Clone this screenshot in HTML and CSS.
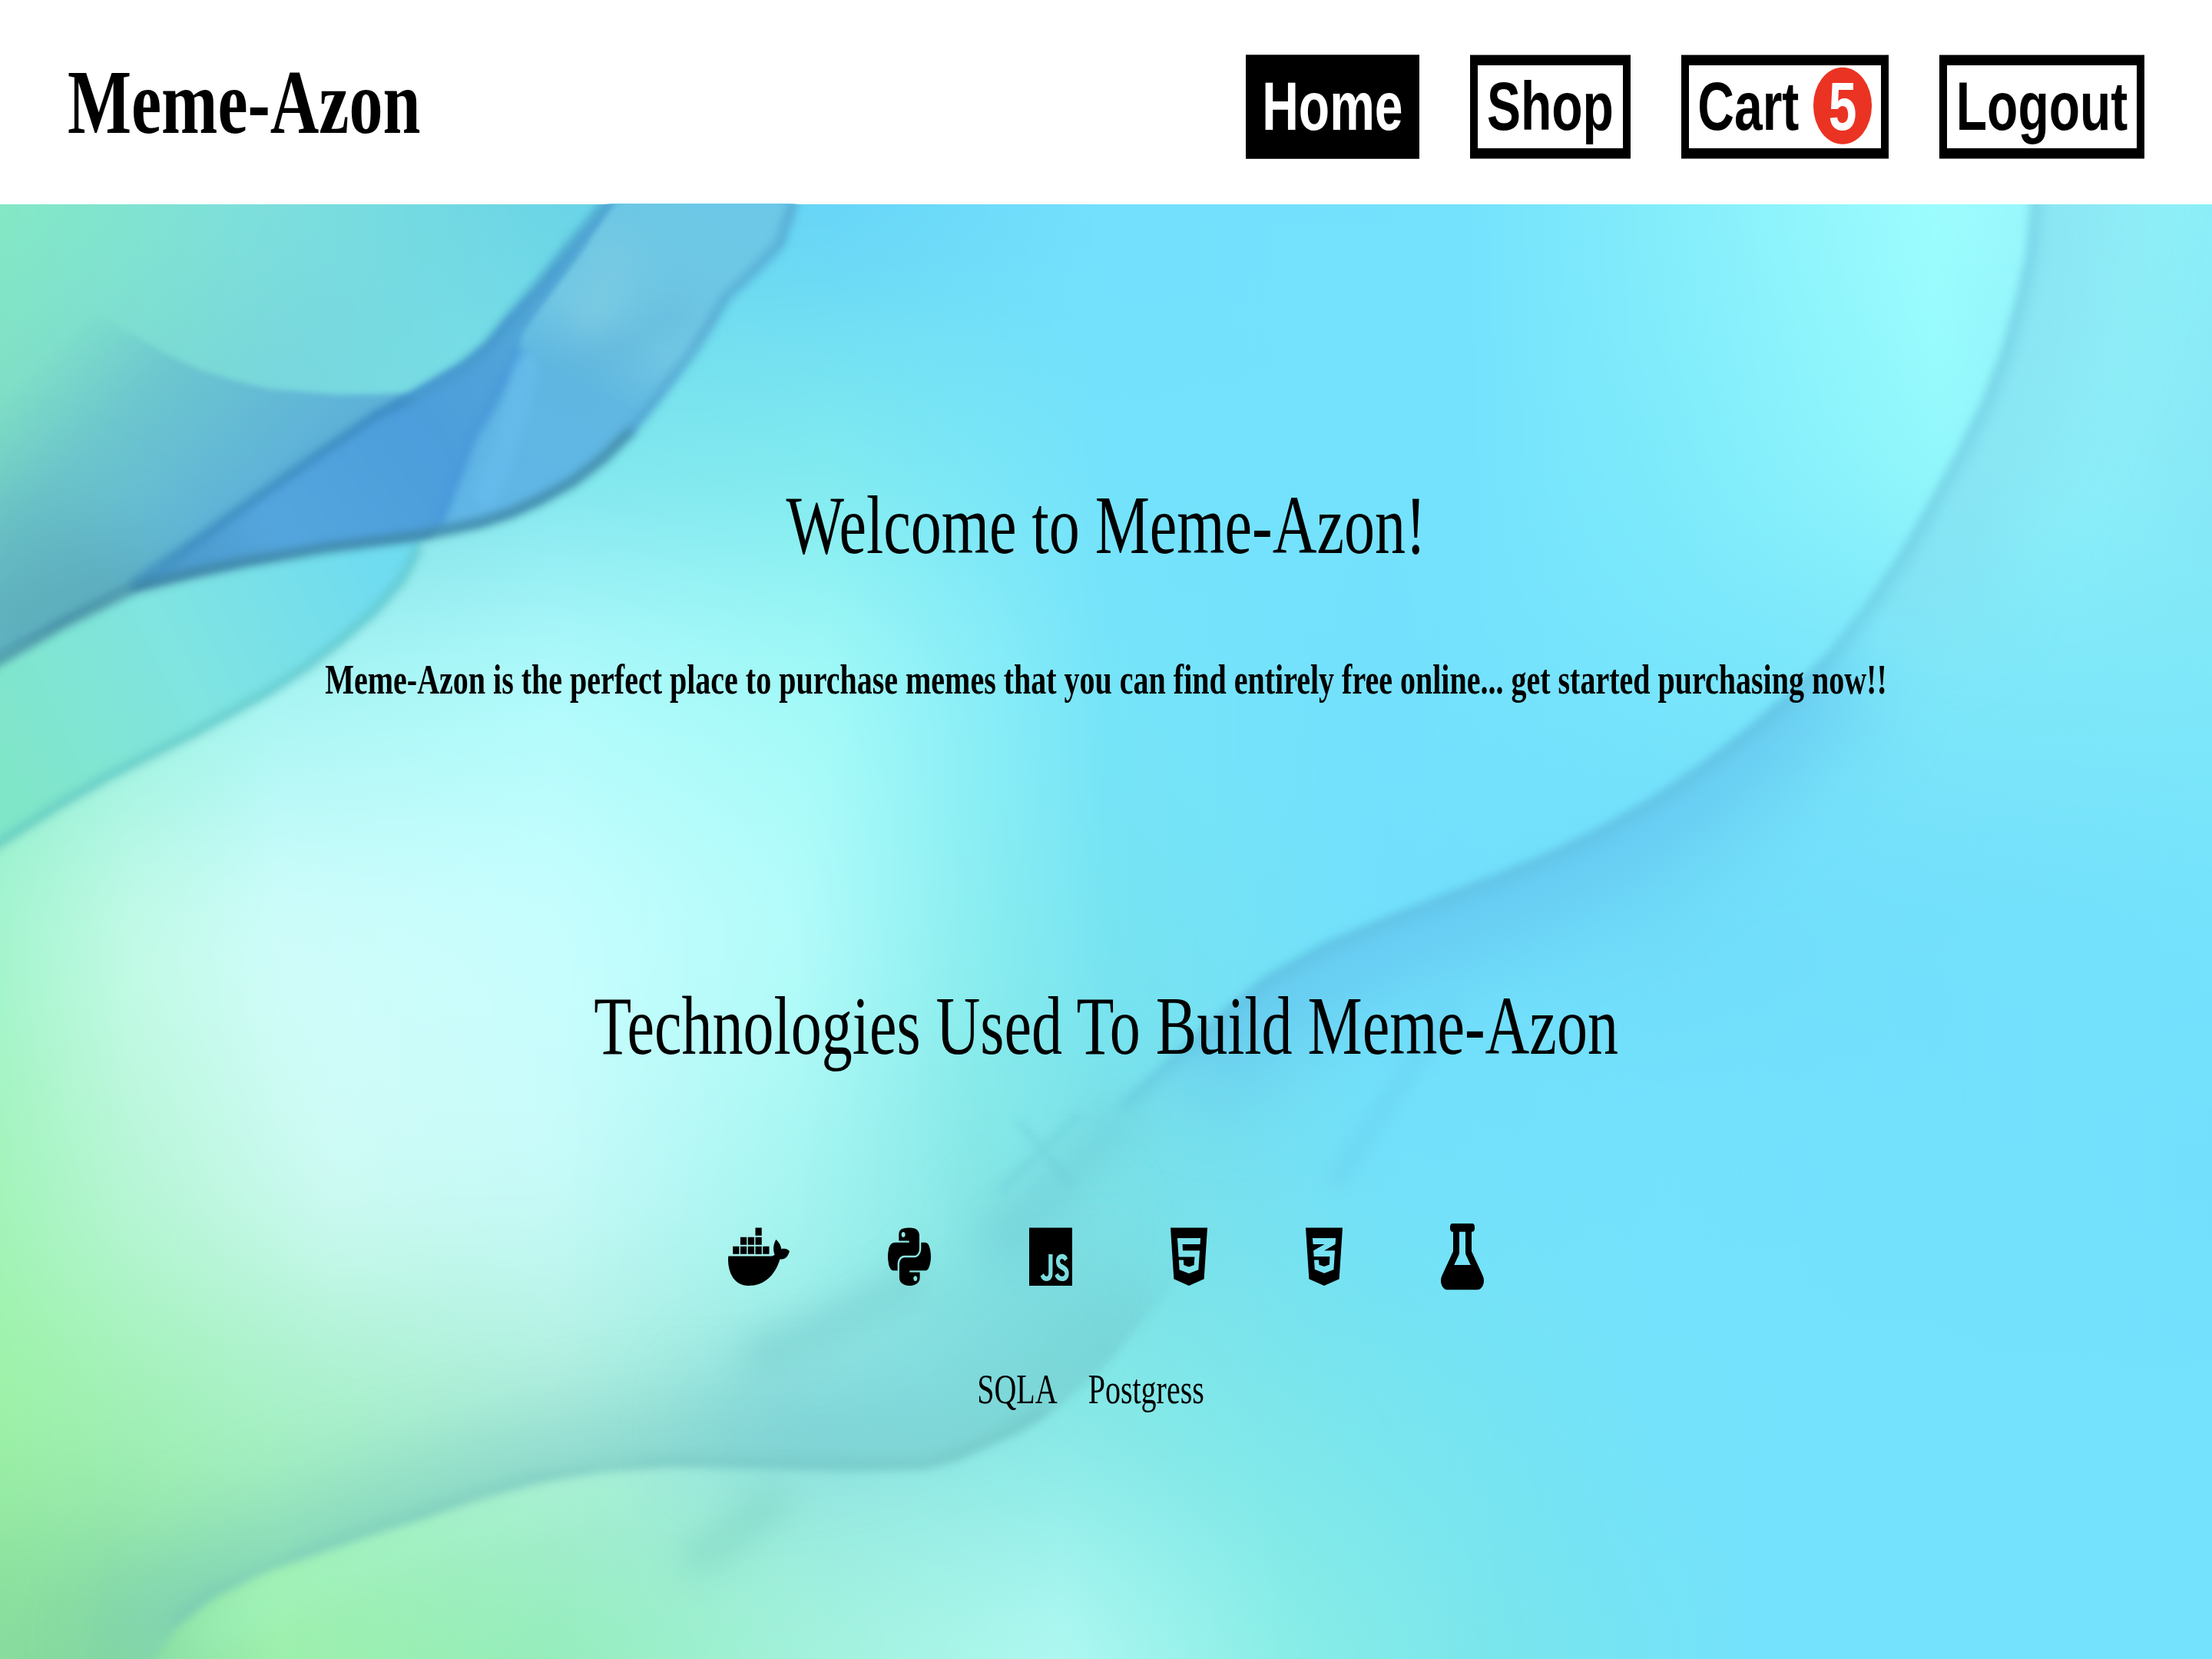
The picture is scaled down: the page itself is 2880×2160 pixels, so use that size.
FILE: index.html
```html
<!DOCTYPE html>
<html lang="en">
<head>
<meta charset="utf-8">
<title>Meme-Azon</title>
<link rel="stylesheet" href="styles.css">
</head>
<body>
<div class="page">
  <header class="header">
    <h1 class="brand">Meme-Azon</h1>
    <nav class="nav">
      <a class="nav-link active">Home</a>
      <a class="nav-link">Shop</a>
      <a class="nav-link">Cart <span class="badge">5</span></a>
      <a class="nav-link">Logout</a>
    </nav>
  </header>
  <main class="main">
    <svg class="backdrop" viewBox="0 145 1568 1031" preserveAspectRatio="none" aria-hidden="true">
      <defs>
        <linearGradient id="r0"><stop offset="0" stop-color="#84e9c6"/><stop offset=".125" stop-color="#7ddfdd"/><stop offset=".25" stop-color="#6ad4e6"/><stop offset=".375" stop-color="#66d4f8"/><stop offset=".5" stop-color="#73e0fd"/><stop offset=".66" stop-color="#74e2fd"/><stop offset=".75" stop-color="#84edfb"/><stop offset=".875" stop-color="#9dfdfe"/><stop offset=".92" stop-color="#98f7fc"/><stop offset="1" stop-color="#8ceff8"/></linearGradient>
        <linearGradient id="r1"><stop offset="0" stop-color="#7edcc6"/><stop offset=".125" stop-color="#76d4dc"/><stop offset=".25" stop-color="#7ce4ec"/><stop offset=".375" stop-color="#7de9ef"/><stop offset=".5" stop-color="#74e2fc"/><stop offset=".66" stop-color="#74e2fd"/><stop offset=".75" stop-color="#7eebfb"/><stop offset=".875" stop-color="#94f9fc"/><stop offset="1" stop-color="#89e8f6"/></linearGradient>
        <linearGradient id="r2"><stop offset="0" stop-color="#8ceccf"/><stop offset=".125" stop-color="#a8f6f4"/><stop offset=".25" stop-color="#b2fbfc"/><stop offset=".375" stop-color="#a2faf7"/><stop offset=".5" stop-color="#76e4f9"/><stop offset=".625" stop-color="#73e1fd"/><stop offset=".75" stop-color="#77e5fc"/><stop offset=".875" stop-color="#7de6f9"/><stop offset="1" stop-color="#7ee8f9"/></linearGradient>
        <linearGradient id="r3"><stop offset="0" stop-color="#a6f5d0"/><stop offset=".06" stop-color="#c4fbe8"/><stop offset=".125" stop-color="#d0fdfb"/><stop offset=".25" stop-color="#c8fefe"/><stop offset=".36" stop-color="#b4fcfb"/><stop offset=".44" stop-color="#8beef0"/><stop offset=".5" stop-color="#77e4f2"/><stop offset=".625" stop-color="#72e0fc"/><stop offset=".75" stop-color="#70dcfa"/><stop offset="1" stop-color="#74e2fd"/></linearGradient>
        <linearGradient id="r4"><stop offset="0" stop-color="#a4f4bc"/><stop offset=".06" stop-color="#b8f6d8"/><stop offset=".15" stop-color="#cffbf6"/><stop offset=".25" stop-color="#c8fbfa"/><stop offset=".36" stop-color="#a6f6f2"/><stop offset=".44" stop-color="#86e8e6"/><stop offset=".52" stop-color="#78dfe8"/><stop offset=".625" stop-color="#72e0fa"/><stop offset=".75" stop-color="#74e2fd"/><stop offset="1" stop-color="#72e0fc"/></linearGradient>
        <linearGradient id="r5"><stop offset="0" stop-color="#9df2a6"/><stop offset=".125" stop-color="#a6f0c6"/><stop offset=".25" stop-color="#aeeedc"/><stop offset=".375" stop-color="#92e6e2"/><stop offset=".5" stop-color="#84e8e6"/><stop offset=".625" stop-color="#78e5ee"/><stop offset=".75" stop-color="#74e2fb"/><stop offset="1" stop-color="#74e2fd"/></linearGradient>
        <linearGradient id="r6"><stop offset="0" stop-color="#86da9c"/><stop offset=".05" stop-color="#84d8a0"/><stop offset=".125" stop-color="#9cf0aa"/><stop offset=".25" stop-color="#94edba"/><stop offset=".375" stop-color="#a4f3de"/><stop offset=".48" stop-color="#b0f9f2"/><stop offset=".58" stop-color="#8aeee6"/><stop offset=".68" stop-color="#79e5ec"/><stop offset=".8" stop-color="#74e2fd"/><stop offset="1" stop-color="#74e2fd"/></linearGradient>
        <linearGradient id="veil" gradientUnits="userSpaceOnUse" x1="50" y1="235" x2="170" y2="360"><stop offset="0" stop-color="#64bcc4" stop-opacity="0"/><stop offset=".4" stop-color="#62b8cc" stop-opacity=".6"/><stop offset="1" stop-color="#5eb2d8"/></linearGradient>
        <linearGradient id="corner" gradientUnits="userSpaceOnUse" x1="10" y1="320" x2="60" y2="440"><stop offset="0" stop-color="#5cacb4" stop-opacity="0"/><stop offset="1" stop-color="#5cacb8"/></linearGradient>
        <linearGradient id="fold" gradientUnits="userSpaceOnUse" x1="110" y1="410" x2="400" y2="200"><stop offset="0" stop-color="#4a98c8"/><stop offset=".25" stop-color="#54a6de"/><stop offset=".6" stop-color="#4c9edc"/><stop offset="1" stop-color="#52a8d6"/></linearGradient>
        <linearGradient id="sash" gradientUnits="userSpaceOnUse" x1="490" y1="145" x2="370" y2="365"><stop offset="0" stop-color="#6cc8e6"/><stop offset=".4" stop-color="#72c8e4"/><stop offset=".6" stop-color="#60b8e2"/><stop offset="1" stop-color="#60b6e6"/></linearGradient>
        <linearGradient id="leaf" gradientUnits="userSpaceOnUse" x1="0" y1="540" x2="270" y2="410"><stop offset="0" stop-color="#80e6c8"/><stop offset=".5" stop-color="#80e4e2"/><stop offset="1" stop-color="#70dcf0"/></linearGradient>
        <filter id="rows" filterUnits="userSpaceOnUse" x="-100" y="-400" width="1800" height="2200" color-interpolation-filters="sRGB"><feGaussianBlur stdDeviation="0 62"/></filter>
        <filter id="b2" filterUnits="userSpaceOnUse" x="-100" y="0" width="1800" height="1400" color-interpolation-filters="sRGB"><feGaussianBlur stdDeviation="2"/></filter>
        <filter id="b3" filterUnits="userSpaceOnUse" x="-100" y="0" width="1800" height="1400" color-interpolation-filters="sRGB"><feGaussianBlur stdDeviation="3"/></filter>
        <filter id="b5" filterUnits="userSpaceOnUse" x="-100" y="0" width="1800" height="1400" color-interpolation-filters="sRGB"><feGaussianBlur stdDeviation="5"/></filter>
        <filter id="b12" filterUnits="userSpaceOnUse" x="-200" y="0" width="2000" height="1500" color-interpolation-filters="sRGB"><feGaussianBlur stdDeviation="12"/></filter>
        <filter id="b28" filterUnits="userSpaceOnUse" x="-200" y="0" width="2000" height="1500" color-interpolation-filters="sRGB"><feGaussianBlur stdDeviation="28"/></filter>
        <path id="arc" d="M1440 60L1439 145L1436 180L1429 211L1418 250L1404 286L1386 322L1366 358L1346 393L1323 427L1296 462L1267 491L1238 516L1207 540L1172 564L1136 585L1100 603L1064 618L1025 633L984 649L938 668L896 692L862 720L830 748L794 781"/>
        <path id="wave" d="M820 925L784 968L745 1002L722 1016L700 1026L678 1036L655 1042L600 1043L540 1041L475 1040L425 1044L380 1052L340 1063L300 1077L262 1089L225 1102L185 1116L150 1134L125 1154L105 1185"/>
        <clipPath id="underArc"><path d="M1440 60L1439 145L1436 180L1429 211L1418 250L1404 286L1386 322L1366 358L1346 393L1323 427L1296 462L1267 491L1238 516L1207 540L1172 564L1136 585L1100 603L1064 618L1025 633L984 649L938 668L896 692L862 720L830 748L794 781L700 880L600 1176H1700V60Z"/></clipPath>
        <clipPath id="overWave"><path d="M1000 700L820 925L784 968L745 1002L722 1016L700 1026L678 1036L655 1042L600 1043L540 1041L475 1040L425 1044L380 1052L340 1063L300 1077L262 1089L225 1102L185 1116L150 1134L125 1154L105 1185H-100V600H1000Z"/></clipPath>
        <clipPath id="overFold"><path d="M-40 212H45L70 224L95 238L118 251L141 262L166 270L191 276L240 280L290 279L230 320L172 360L130 390L95 415L45 442L-40 485Z"/></clipPath>
      </defs>
      <g filter="url(#rows)">
        <rect x="0" y="-300" width="1568" height="532" fill="url(#r0)"/>
        <rect x="0" y="231" width="1568" height="173" fill="url(#r1)"/>
        <rect x="0" y="403" width="1568" height="173" fill="url(#r2)"/>
        <rect x="0" y="575" width="1568" height="173" fill="url(#r3)"/>
        <rect x="0" y="747" width="1568" height="172" fill="url(#r4)"/>
        <rect x="0" y="918" width="1568" height="173" fill="url(#r5)"/>
        <rect x="0" y="1090" width="1568" height="500" fill="url(#r6)"/>
      </g>
      <!-- large arc sweeping down from the top right -->
      <g filter="url(#b3)"><g clip-path="url(#underArc)" fill="none">
        <path d="M1439 100L1439 145L1429 211L1404 286L1366 358L1323 427" stroke="#7ccfe8" stroke-width="130" stroke-opacity=".4" filter="url(#b28)"/>
        <path d="M1296 462L1207 540L1136 585L1064 618L984 649L896 692L830 748" stroke="#5cb8ea" stroke-width="100" stroke-opacity=".5" filter="url(#b28)"/>
        <use href="#arc" stroke="#5ab6d2" stroke-width="16" stroke-opacity=".4" filter="url(#b5)"/>
      </g></g>
      <path d="M800 785L750 840L700 885" fill="none" stroke="#64bcc8" stroke-width="30" stroke-opacity=".25" filter="url(#b12)"/>
      <path d="M1030 715Q990 770 945 840" fill="none" stroke="#62c6e8" stroke-width="16" stroke-opacity=".22" filter="url(#b5)"/>
      <path d="M765 790L708 845M722 795L760 840" fill="none" stroke="#62c2d0" stroke-width="5" stroke-opacity=".28" filter="url(#b3)"/>
      <!-- wave along the bottom -->
      <g filter="url(#b3)"><g clip-path="url(#overWave)" fill="none">
        <use href="#wave" stroke="#68bcc0" stroke-width="90" stroke-opacity=".4" filter="url(#b28)"/>
        <path d="M745 1002L700 1026L655 1042L540 1041L475 1040L380 1052L300 1077L225 1102L150 1134L125 1154" stroke="#68b8b4" stroke-width="14" stroke-opacity=".4" filter="url(#b5)"/>
      </g></g>
      <path d="M745 850Q720 960 600 1000L500 1010" fill="none" stroke="#70c8d4" stroke-width="70" stroke-opacity=".35" filter="url(#b28)"/>
      <path d="M655 905Q600 935 530 965" fill="none" stroke="#68c0c4" stroke-width="26" stroke-opacity=".4" filter="url(#b12)"/>
      <path d="M556 1058Q520 1090 485 1110" fill="none" stroke="#70c8b8" stroke-width="24" stroke-opacity=".4" filter="url(#b12)"/>
      <path d="M140 1165Q190 1130 300 1096T450 1058" fill="none" stroke="#a8fcd0" stroke-width="20" stroke-opacity=".3" filter="url(#b12)"/>
      <!-- folded ribbon at the top left -->
      <g filter="url(#b2)">
        <path d="M-10 475L50 444L95 420L172 401L229 390L298 381L294 397L285 413L266 435L244 454L218 474L191 492L141 520L110 535L76 553L40 574L-10 606Z" fill="url(#leaf)"/>
        <g clip-path="url(#overFold)">
          <rect x="-40" y="145" width="400" height="340" fill="url(#veil)"/>
          <path d="M-40 330H20L150 440L-40 500Z" fill="url(#corner)" filter="url(#b28)"/>
        </g>
        <path d="M442 130H567L563 150L554 173L535 192L516 210L506 230L493 248L480 267L466 285L448 307L428 326L406 343L382 357L362 366L340 373L298 381L330 290L366 232L400 185Z" fill="url(#sash)"/>
        <path d="M90 420L130 390L172 360L220 326L267 292L290 279L328 257L345 243L359 226L380 204L401 179L440 135L412 180L382 220L370 237L366 256L348 290L336 310L328 331L313 370L305 381L229 390L172 401L130 410Z" fill="url(#fold)"/>
      </g>
      <g fill="none" stroke-linecap="round" stroke-linejoin="round" filter="url(#b3)">
        <path d="M95 414L130 390L172 360L220 326L267 294L290 283" stroke="#3a88bc" stroke-width="7" stroke-opacity=".75"/>
        <path d="M290 283L328 260L345 246L361 226L382 202L403 176L435 138" stroke="#4496c8" stroke-width="8" stroke-opacity=".65"/>
        <path d="M-8 472L45 442L95 417L135 407L172 399L229 389L298 380L340 371L362 364L382 355L406 342L428 325L447 306" stroke="#3c84a0" stroke-width="8" stroke-opacity=".75"/>
        <path d="M447 306L465 284L492 248L514 212L535 192L553 173L562 145" stroke="#4c9ecc" stroke-width="8" stroke-opacity=".55"/>
        <path d="M368 250L348 290L336 310L328 331L312 370" stroke="#4494d8" stroke-width="7" stroke-opacity=".6"/>
        <path d="M372 260Q366 305 345 350" stroke="#6cc4f4" stroke-width="18" stroke-opacity=".35"/>
        <path d="M296 390L285 411L266 433L242 454L218 473L190 491L141 518L110 534L76 551L40 572L-10 604" stroke="#5cc0c0" stroke-width="8" stroke-opacity=".5"/>
      </g>
      <g fill="none" filter="url(#b12)">
        <path d="M395 262Q440 250 490 215" stroke="#5cb0d8" stroke-width="20" stroke-opacity=".5"/>
        <path d="M440 170L415 240" stroke="#86cce0" stroke-width="24" stroke-opacity=".5"/>
      </g>
    </svg>
    <h2 class="heading">Welcome to Meme-Azon!</h2>
    <p class="lead">Meme-Azon is the perfect place to purchase memes that you can find entirely free online... get started purchasing now!!</p>
    <h2 class="heading tech-heading">Technologies Used To Build Meme-Azon</h2>
    <div class="icons">
      <svg class="icon" viewBox="0 0 640 512"><path d="M349.9 236.3h-66.1v-59.4h66.1v59.4zm0-204.3h-66.1v60.7h66.1V32zm78.2 144.8H362v59.4h66.1v-59.4zm-156.3-72.1h-66.1v60.1h66.1v-60.1zm78.1 0h-66.1v60.1h66.1v-60.1zm276.8 100c-14.4-9.7-47.6-13.2-73.1-8.4-3.3-24-16.7-44.9-41.1-63.7l-14-9.3-9.3 14c-18.4 27.8-23.4 73.6-3.7 103.8-8.7 4.7-25.8 11.1-48.4 10.7H2.4c-8.7 50.8 5.8 116.8 44 162.1 37.1 43.9 92.7 66.2 165.4 66.2 157.4 0 273.9-72.5 328.4-204.2 21.4.4 67.6.1 91.3-45.2 1.5-2.5 6.6-13.2 8.5-17.1l-13.3-8.9zm-511.1-27.9h-66v59.4h66.1v-59.4zm78.1 0h-66.1v59.4h66.1v-59.4zm78.1 0h-66.1v59.4h66.1v-59.4zm-78.1-72.1h-66.1v60.1h66.1v-60.1z"/></svg>
      <svg class="icon" viewBox="0 0 448 512"><path d="M439.8 200.5c-7.7-30.9-22.3-54.2-53.4-54.2h-40.1v47.4c0 36.8-31.2 67.8-66.8 67.8H172.7c-29.2 0-53.4 25-53.4 54.3v101.8c0 29 25.2 46 53.4 54.3 33.8 9.9 66.3 11.7 106.8 0 26.9-7.8 53.4-23.5 53.4-54.3v-40.7H226.2v-13.6h160.2c31.1 0 42.6-21.7 53.4-54.2 11.2-33.5 10.7-65.7 0-108.6zM286.2 404c11.1 0 20.1 9.1 20.1 20.3 0 11.3-9 20.4-20.1 20.4-11 0-20.1-9.2-20.1-20.4.1-11.3 9.1-20.3 20.1-20.3zM167.8 248.1h106.8c29.7 0 53.4-24.5 53.4-54.3V91.9c0-29-24.4-50.7-53.4-55.6-35.8-5.9-74.7-5.6-106.8.1-45.2 8-53.4 24.7-53.4 55.6v40.7h106.9v13.6h-147c-31.1 0-58.3 18.7-66.8 54.2-9.8 40.7-10.2 66.1 0 108.6 7.6 31.6 25.7 54.2 56.8 54.2H101v-48.8c0-35.3 30.5-66.4 66.8-66.4zm-6.7-142.6c-11.1 0-20.1-9.1-20.1-20.3.1-11.3 9-20.4 20.1-20.4 11 0 20.1 9.2 20.1 20.4s-9 20.3-20.1 20.3z"/></svg>
      <svg class="icon" viewBox="0 0 448 512"><path d="M0 32v448h448V32H0zm243.8 349.4c0 43.6-25.6 63.5-62.9 63.5-33.7 0-53.2-17.4-63.2-38.5l34.3-20.7c6.6 11.7 12.6 21.6 27.1 21.6 13.8 0 22.6-5.4 22.6-26.5V237.7h42.1v143.7zm99.6 63.5c-39.1 0-64.4-18.6-76.7-43l34.3-19.8c9 14.7 20.8 25.6 41.5 25.6 17.4 0 28.6-8.7 28.6-20.8 0-14.4-11.4-19.5-30.7-28l-10.5-4.5c-30.4-12.9-50.5-29.2-50.5-63.5 0-31.6 24.1-55.6 61.6-55.6 26.8 0 46 9.3 59.8 33.7L368 290c-7.2-12.9-15-18-27.1-18-12.3 0-20.1 7.8-20.1 18 0 12.6 7.8 17.7 25.9 25.6l10.5 4.5c35.8 15.3 55.9 31 55.9 66.2 0 37.8-29.8 58.6-69.7 58.6z"/></svg>
      <svg class="icon" viewBox="0 0 384 512"><path d="M0 32l34.9 395.8L191.5 480l157.6-52.2L384 32H0zm308.2 127.9H124.4l4.1 49.4h175.6l-13.6 148.4-97.9 27v.3h-1.1l-98.7-27.3-6-75.8h47.7L138 320l53.5 14.5 53.7-14.5 6-62.2H84.3L71.5 112.2h241.1l-4.4 47.7z"/></svg>
      <svg class="icon" viewBox="0 0 384 512"><path d="M0 32l34.9 395.8L192 480l157.1-52.2L384 32H0zm313.1 80l-4.8 47.3L193 208.6l-.3.1h111.5l-12.8 146.6-98.2 28.7-98.8-29.2-6.4-73.9h48.9l3.2 38.3 52.6 13.3 54.7-15.4 3.7-61.6-166.3-.5v-.1l-.2.1-3.6-46.3L193.1 162l6.5-2.7H76.7L70.9 112h242.2z"/></svg>
      <svg class="icon" viewBox="0 0 448 512"><path d="M437.2 403.5L320 215V64h8c13.3 0 24-10.7 24-24V24c0-13.3-10.7-24-24-24H120c-13.3 0-24 10.7-24 24v16c0 13.3 10.7 24 24 24h8v151L10.8 403.5C-18.5 450.6 15.3 512 70.9 512h306.2c55.7 0 89.4-61.5 60.1-108.5zM137.9 320l48.2-77.6c3.7-5.2 5.8-11.6 5.8-18.4V64h64v160c0 6.9 2.2 13.2 5.8 18.4l48.2 77.6h-172z"/></svg>
    </div>
    <div class="extras"><span class="extra">SQLA</span><span class="extra">Postgress</span></div>
  </main>
</div>
</body>
</html>
```
FILE: styles.css
```css
* { box-sizing: border-box; }
html, body { margin: 0; overflow: hidden; background: #fff; }
body { width: 2880px; height: 2160px; }

/* the 2880x1600 layout is stretched vertically to fill the window */
.page {
  width: 2880px;
  height: 1600px;
  display: flex;
  flex-direction: column;
  transform: scaleY(1.35);
  transform-origin: 0 0;
  font-family: "Liberation Serif", "Times New Roman", serif;
  color: #000;
}
.header {
  flex: none;
  height: 197px;
  padding: 52.5px 88px 0;
  display: flex;
  align-items: flex-start;
  justify-content: space-between;
  background: #fff;
}
.brand { margin: -4px 0 0; font-size: 88px; line-height: 100px; font-weight: 700; }
.nav { display: flex; gap: 66px; }
.nav-link {
  height: 100px;
  padding: 0 11.7px;
  border: 10px solid #000;
  font: 700 66px/78px "Liberation Sans", Arial, sans-serif;
  white-space: nowrap;
}
.active { background: #000; color: #fff; }
.badge {
  display: inline-block;
  height: 74px;
  line-height: 74px;
  padding: 0 20px;
  border-radius: 50%;
  background: #eb3323;
  color: #fff;
}
.main {
  flex: 1;
  position: relative;
  display: flex;
  flex-direction: column;
  align-items: center;
  overflow: hidden;
}
.backdrop { position: absolute; inset: 0; width: 100%; height: 100%; z-index: -1; }
.heading { margin: 261px 0 0; font-size: 80px; line-height: 96px; font-weight: 400; white-space: nowrap; }
.lead { margin: 78px 0 0; font-size: 40px; line-height: 48px; font-weight: 700; white-space: nowrap; }
.tech-heading { margin-top: 261px; }
.icons { display: flex; gap: 128px; margin-top: 143px; }
.icon { height: 64px; width: auto; fill: #000; }
.extras { display: flex; margin-top: 72px; font-size: 40px; line-height: 48px; }
.extra { margin-right: 40px; }
```
